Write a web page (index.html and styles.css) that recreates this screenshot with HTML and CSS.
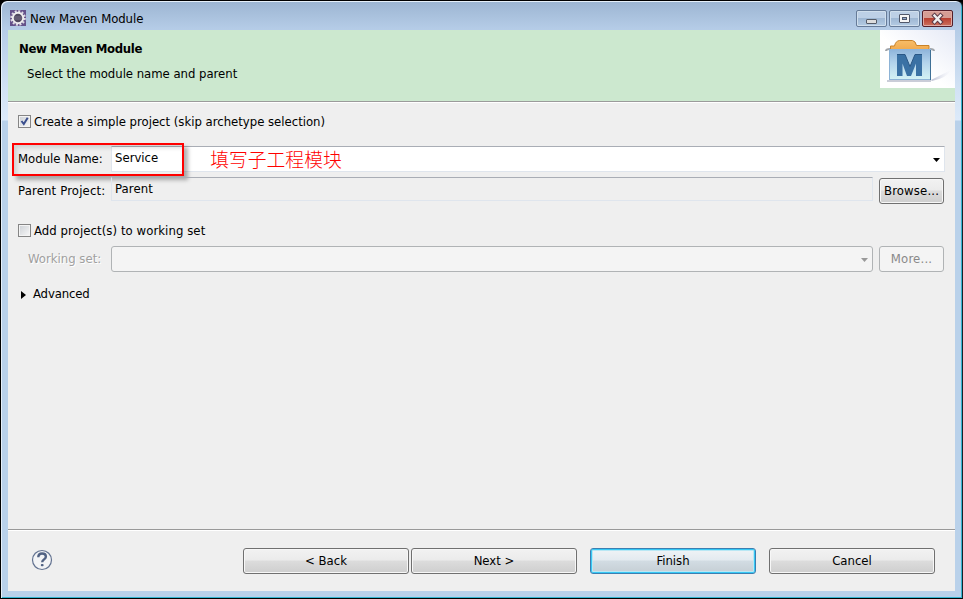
FILE: index.html
```
<!DOCTYPE html>
<html lang="en">
<head>
<meta charset="utf-8">
<title>New Maven Module</title>
<link rel="stylesheet" href="styles.css">
</head>
<body>
<div class="window">
  <div class="titlebar">
    <svg class="app-icon" width="16" height="16" viewBox="0 0 16 16">
      <rect width="16" height="16" fill="#65518a"/>
      <circle cx="8" cy="8" r="6.700" fill="none" stroke="#dedbe3" stroke-width="2.200" stroke-dasharray="2 1.508"/>
      <circle cx="8" cy="8" r="5.200" fill="#51485f" stroke="#f1eff0" stroke-width="1.900"/>
      <path d="M4 7h8M4 9h8" stroke="#81788f" stroke-width=".8"/>
    </svg>
    <span class="caption">New Maven Module</span>
    <div class="controls">
      <div class="control"><svg width="29" height="15"><rect x="9.5" y="8.5" width="10" height="4" rx=".5" fill="#ddd" stroke="#555c68"/></svg></div>
      <div class="control"><svg width="29" height="15"><rect x="9.5" y="3.5" width="10" height="8" rx=".5" fill="#f5f5f5" stroke="#50586a"/><rect x="12.5" y="6.5" width="4" height="2" fill="#91aace" stroke="#50586a"/></svg></div>
      <div class="control close"><svg width="29" height="15"><path d="M11.500 4.500l6 6.500M17.500 4.500l-6 6.500" stroke="#5a3946" stroke-width="4.400" stroke-linecap="square"/><path d="M11.500 4.500l6 6.500M17.500 4.500l-6 6.500" stroke="#f0eeee" stroke-width="2.400" stroke-linecap="square"/></svg></div>
    </div>
  </div>
  <div class="client">
    <header class="banner">
      <div class="banner-text">
        <h1>New Maven Module</h1>
        <p>Select the module name and parent</p>
      </div>
      <svg class="logo" width="75" height="58" viewBox="0 0 75 58">
        <defs>
          <linearGradient id="bg" x1="0" y1="1" x2="1" y2="0"><stop offset=".45" stop-color="#fff"/><stop offset="1" stop-color="#e6eaf6"/></linearGradient>
          <linearGradient id="box" x1="0" y1="0" x2="0" y2="1"><stop stop-color="#8db3da"/><stop offset=".45" stop-color="#b4d4ec"/><stop offset="1" stop-color="#d5f3f5"/></linearGradient>
          <linearGradient id="folder" x1="0" y1="0" x2="0" y2="1"><stop stop-color="#f8bd68"/><stop offset="1" stop-color="#f0a94c"/></linearGradient>
          <linearGradient id="shade" x1="0" y1="0" x2="1" y2="0"><stop stop-color="#b9bdd0"/><stop offset="1" stop-color="#e6e9f4" stop-opacity="0"/></linearGradient>
        </defs>
        <rect width="75" height="58" fill="url(#bg)"/>
        <path d="M51 50L71 40Q67 48 52 51Z" fill="url(#shade)"/>
        <path d="M7 51h44" stroke="#b9bccb" stroke-width="1.500"/>
        <path d="M10.500 20v-4h4q1-5 5-5.500h13q3 .5 4 5h12.500v5z" fill="url(#folder)" stroke="#c98228"/>
        <path d="M6 21q0-2 4-2M54 21q0-2-4-2" fill="none" stroke="#a1a5aa" stroke-width="2"/>
        <path d="M9 19h42v31H9z" fill="url(#box)"/>
        <path d="M9.500 19v31M9 49.500h41" stroke="#8db3d6"/>
        <path d="M50.500 20v30" stroke="#3f7096"/>
        <path d="M17 46V24.500h8l5 12 5-12h7V46h-6V33.500L31 46h-4l-4.500-12.500V46z" fill="#3a71a4"/>
        <path d="M17 24.500h8l5 12 5-12h7" fill="none" stroke="#2a5785"/>
      </svg>
    </header>
    <main class="form">
      <label class="check first"><span class="box"><svg width="11" height="11"><path d="M2.500 5l2.300 3L8.700 1.800" fill="none" stroke="#3b4f8e" stroke-width="2"/></svg></span><span class="t-create">Create a simple project (skip archetype selection)</span></label>
      <div class="row module">
        <span class="label t-module">Module Name:</span>
        <div class="combo"><span class="t-service">Service</span><span class="note">填写子工程模块</span><svg class="arrow" width="7" height="4"><path d="M0 0h7L3.500 4z" fill="#000"/></svg></div>
        <div class="highlight"></div>
      </div>
      <div class="row parent">
        <span class="label t-parentp">Parent Project:</span>
        <div class="field"><span class="t-parent">Parent</span></div>
        <div class="btn small"><span class="t-browse">Browse...</span></div>
      </div>
      <label class="check second"><span class="box"></span><span class="t-add">Add project(s) to working set</span></label>
      <div class="row working">
        <span class="label t-working">Working set:</span>
        <div class="disabled-combo"><svg width="7" height="4"><path d="M0 0h7L3.500 4z" fill="#999"/></svg></div>
        <div class="btn small disabled"><span class="t-more">More...</span></div>
      </div>
      <div class="advanced"><svg width="5" height="8"><path d="M0 0l5 4-5 4z" fill="#000"/></svg><span class="t-adv">Advanced</span></div>
    </main>
    <footer class="footer">
      <svg class="help" width="22" height="22" viewBox="0 0 22 22"><circle cx="11" cy="11" r="9.500" fill="#f3f4f6" stroke="#637391" stroke-width="1.200"/><path d="M7.300 8.200q0-3.700 3.800-3.700t3.800 3.200c0 2.700-3.700 2.700-3.700 5.600" fill="none" stroke="#526384" stroke-width="2.400"/><rect x="9.800" y="15" width="2.800" height="2.300" rx="1" fill="#526384"/></svg>
      <div class="btn back"><span class="t-back">&lt; Back</span></div>
      <div class="btn next"><span class="t-next">Next &gt;</span></div>
      <div class="btn finish"><span class="t-finish">Finish</span></div>
      <div class="btn cancel"><span class="t-cancel">Cancel</span></div>
    </footer>
  </div>
</div>
</body>
</html>
```
FILE: styles.css
```
* { box-sizing: border-box; }
body {
  margin: 0;
  width: 963px;
  height: 599px;
  overflow: hidden;
  background: #000;
  color: #000;
  font: 13px/16px "DejaVu Sans Condensed", "DejaVu Sans", sans-serif;
  white-space: nowrap;
}
svg { display: block; flex: none; }
.window {
  height: 599px;
  padding: 0 7px 7px;
  border: 1px solid #000;
  border-right-color: #16222b;
  border-radius: 7px 7px 0 0;
  background: linear-gradient(#9cb5d2 0, #b5cce7 28px, #d2e2f4 88px, #dceafa 119px, #b9d1ea 120px);
  box-shadow: inset 1px 1px #e6f0fa, inset -1px -1px #35b5d1;
}
.titlebar { display: flex; align-items: center; height: 29px; padding: 6px 2px 0; }
.app-icon { margin-top: -1px; }
.caption { margin-left: 4px; letter-spacing: -.06px; }
.controls { display: flex; gap: 2px; margin: -1px 0 0 auto; }
.control {
  width: 31px;
  height: 17px;
  border: 1px solid #667b98;
  border-radius: 2px;
  background: linear-gradient(#bdd0e6 45%, #9fb8d4 50%, #b4cbe3);
  box-shadow: inset 0 0 0 1px #d0dfed;
}
.close { background: linear-gradient(#d69d94 45%, #b94132 50%, #cc715f); border-color: #541e29; box-shadow: inset 0 0 0 1px #e0aaa4; }
.client { display: flex; flex-direction: column; height: 561px; background: #efefef; }
.banner { display: flex; justify-content: space-between; height: 73px; background: #cce8cf; border-bottom: 1px solid #fff; box-shadow: inset 0 -1px #9b9b9b; }
h1 { margin: 11px 0 0 11px; font-size: 13px; line-height: 16px; letter-spacing: -.33px; }
p { margin: 9px 0 0 19px; letter-spacing: -.03px; }
.form { flex: 1; padding: 11px 10px 0; }
.check { display: flex; align-items: center; height: 16px; }
.box { width: 13px; height: 13px; margin-right: 3px; border: 1px solid #858585; background: linear-gradient(135deg, #ccd0d5, #f8f8f8); box-shadow: inset 0 0 0 1px #f4f4f4; }
.first .box { margin-top: -1px; }
.t-create { letter-spacing: -.01px; }
.row { display: flex; position: relative; }
.label { width: 93px; flex: none; }
.module { height: 26px; margin-top: 16px; }
.module .label { padding-top: 5px; }
.combo { display: flex; width: 834px; height: 26px; padding: 3px 4px 0 3px; border: 1px solid #dfe5ed; border-top-color: #a9adb5; background: #fff; }
.note { margin: -1px 0 0 52px; color: #f00; font: 300 18.8px/20px "Noto Sans CJK SC", sans-serif; }
.arrow { margin: 8px 0 0 auto; }
.highlight { position: absolute; left: -6px; top: -3px; width: 172px; height: 33px; border: 2px solid #f00; box-shadow: 4px 4px 4px rgba(0,0,0,.3), inset 3px 3px 4px rgba(0,0,0,.13); }
.parent { height: 27px; margin-top: 5px; }
.parent .label { padding-top: 6px; }
.t-parentp { letter-spacing: .16px; }
.field { width: 762px; height: 24px; padding: 3px; border: 1px solid #dfe5ed; border-top-color: #a9adb5; }
.t-parent { letter-spacing: .12px; }
.t-add { letter-spacing: .07px; }
.t-adv { letter-spacing: -.15px; }
.btn {
  display: flex;
  justify-content: center;
  align-items: center;
  width: 166px;
  height: 26px;
  flex: none;
  padding-bottom: 1px;
  border: 1px solid #707070;
  border-radius: 3px;
  background: linear-gradient(#f2f2f2, #ebebeb 46%, #dcdcdc 50%, #cecece);
  box-shadow: inset 0 0 0 1px #f7f7f7;
}
.small { width: 65px; margin-left: 6px; }
.t-browse { letter-spacing: .15px; }
.t-more { letter-spacing: .2px; }
.parent .small { margin-top: 1px; }
.second { margin-top: 18px; }
.second .t-add { margin-top: 1px; }
.working { margin-top: 8px; color: #a0a0a0; }
.working .label { padding: 5px 0 0 10px; text-shadow: 1px 1px #fff; }
.disabled-combo { display: flex; justify-content: flex-end; align-items: center; width: 762px; height: 26px; padding: 1px 4px 0; border: 1px solid #b0b3b5; border-radius: 3px; background: #f4f4f4; }
.disabled { border-color: #b0b3b5; background: #f4f4f4; color: #898989; box-shadow: none; }
.advanced { display: flex; align-items: center; gap: 7px; height: 16px; margin: 14px 0 0 3px; }
.advanced svg { margin-top: 2px; }
.footer { display: flex; height: 62px; padding: 18px 20px 0 23px; border-top: 1px solid #999; box-shadow: inset 0 1px #fff; }
.help { margin-top: 1px; }
.back { margin-left: 190px; }
.next { margin-left: 2px; }
.finish, .cancel { margin-left: 13px; }
.finish { border-color: #3c7fb1; background: linear-gradient(#f0f4f6, #e3eaf0 46%, #d2dce3 50%, #c5ced4); box-shadow: inset 0 0 0 1px #36c8f5, inset 0 0 0 2px #b9e7f4; }
```
